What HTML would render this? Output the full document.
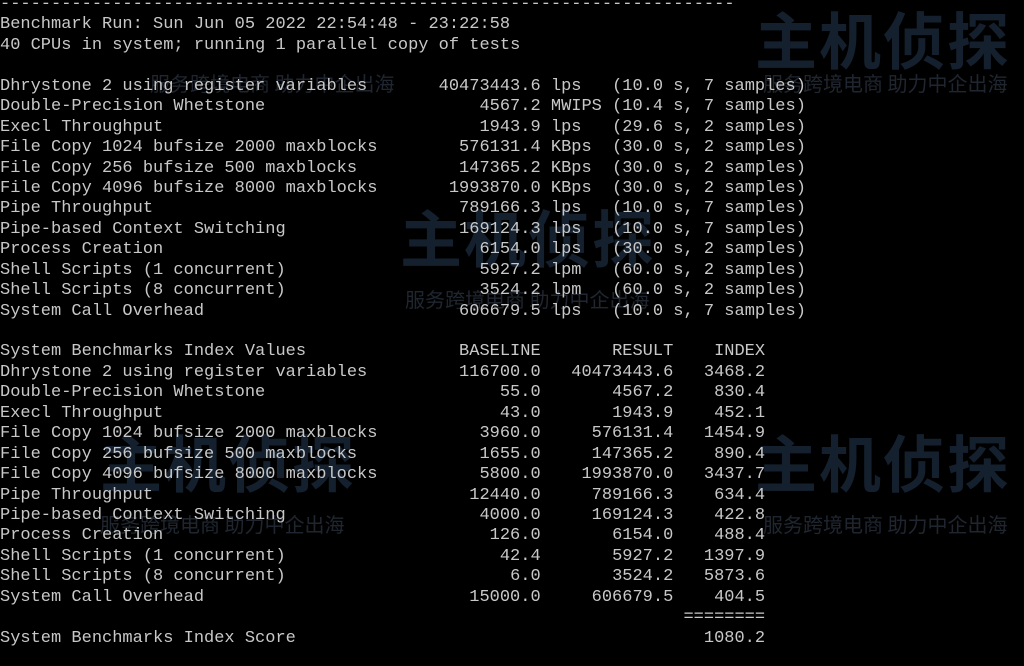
<!DOCTYPE html>
<html><head><meta charset="utf-8"><style>
html,body{margin:0;padding:0;background:#000;width:1024px;height:666px;overflow:hidden;position:relative}
.wm{position:absolute;color:#14202e;font-family:"Noto Sans CJK SC",sans-serif;white-space:nowrap;z-index:0}
.big{font-size:62px;font-weight:bold;letter-spacing:2px}
.sm{font-size:20px;color:#202630}
.term{position:absolute;left:0;top:-5px;z-index:1;font-family:"Liberation Mono",monospace;font-size:17px;line-height:20.45px;color:#c8c8c8;white-space:pre}
.r{display:flex;height:20.45px}
.n{width:40ch;display:inline-block}
.v{width:13ch;text-align:right;display:inline-block}
.i{width:9ch;text-align:right;display:inline-block}
</style></head><body>
<div class="wm big" style="left:755px;top:-8px">主机侦探</div>
<div class="wm sm" style="left:763px;top:68px">服务跨境电商 助力中企出海</div>
<div class="wm sm" style="left:150px;top:68px">服务跨境电商 助力中企出海</div>
<div class="wm big" style="left:400px;top:190px">主机侦探</div>
<div class="wm sm" style="left:405px;top:284px">服务跨境电商 助力中企出海</div>
<div class="wm big" style="left:100px;top:415px">主机侦探</div>
<div class="wm sm" style="left:100px;top:509px">服务跨境电商 助力中企出海</div>
<div class="wm big" style="left:755px;top:415px">主机侦探</div>
<div class="wm sm" style="left:763px;top:509px">服务跨境电商 助力中企出海</div>
<div class="term"><div class="r">------------------------------------------------------------------------</div><div class="r">Benchmark Run: Sun Jun 05 2022 22:54:48 - 23:22:58</div><div class="r">40 CPUs in system; running 1 parallel copy of tests</div><div class="r"> </div><div class="r"><span class="n">Dhrystone 2 using register variables</span><span class="v">40473443.6</span><span> lps   (10.0 s, 7 samples)</span></div><div class="r"><span class="n">Double-Precision Whetstone</span><span class="v">4567.2</span><span> MWIPS (10.4 s, 7 samples)</span></div><div class="r"><span class="n">Execl Throughput</span><span class="v">1943.9</span><span> lps   (29.6 s, 2 samples)</span></div><div class="r"><span class="n">File Copy 1024 bufsize 2000 maxblocks</span><span class="v">576131.4</span><span> KBps  (30.0 s, 2 samples)</span></div><div class="r"><span class="n">File Copy 256 bufsize 500 maxblocks</span><span class="v">147365.2</span><span> KBps  (30.0 s, 2 samples)</span></div><div class="r"><span class="n">File Copy 4096 bufsize 8000 maxblocks</span><span class="v">1993870.0</span><span> KBps  (30.0 s, 2 samples)</span></div><div class="r"><span class="n">Pipe Throughput</span><span class="v">789166.3</span><span> lps   (10.0 s, 7 samples)</span></div><div class="r"><span class="n">Pipe-based Context Switching</span><span class="v">169124.3</span><span> lps   (10.0 s, 7 samples)</span></div><div class="r"><span class="n">Process Creation</span><span class="v">6154.0</span><span> lps   (30.0 s, 2 samples)</span></div><div class="r"><span class="n">Shell Scripts (1 concurrent)</span><span class="v">5927.2</span><span> lpm   (60.0 s, 2 samples)</span></div><div class="r"><span class="n">Shell Scripts (8 concurrent)</span><span class="v">3524.2</span><span> lpm   (60.0 s, 2 samples)</span></div><div class="r"><span class="n">System Call Overhead</span><span class="v">606679.5</span><span> lps   (10.0 s, 7 samples)</span></div><div class="r"> </div><div class="r"><span class="n">System Benchmarks Index Values</span><span class="v">BASELINE</span><span class="v">RESULT</span><span class="i">INDEX</span></div><div class="r"><span class="n">Dhrystone 2 using register variables</span><span class="v">116700.0</span><span class="v">40473443.6</span><span class="i">3468.2</span></div><div class="r"><span class="n">Double-Precision Whetstone</span><span class="v">55.0</span><span class="v">4567.2</span><span class="i">830.4</span></div><div class="r"><span class="n">Execl Throughput</span><span class="v">43.0</span><span class="v">1943.9</span><span class="i">452.1</span></div><div class="r"><span class="n">File Copy 1024 bufsize 2000 maxblocks</span><span class="v">3960.0</span><span class="v">576131.4</span><span class="i">1454.9</span></div><div class="r"><span class="n">File Copy 256 bufsize 500 maxblocks</span><span class="v">1655.0</span><span class="v">147365.2</span><span class="i">890.4</span></div><div class="r"><span class="n">File Copy 4096 bufsize 8000 maxblocks</span><span class="v">5800.0</span><span class="v">1993870.0</span><span class="i">3437.7</span></div><div class="r"><span class="n">Pipe Throughput</span><span class="v">12440.0</span><span class="v">789166.3</span><span class="i">634.4</span></div><div class="r"><span class="n">Pipe-based Context Switching</span><span class="v">4000.0</span><span class="v">169124.3</span><span class="i">422.8</span></div><div class="r"><span class="n">Process Creation</span><span class="v">126.0</span><span class="v">6154.0</span><span class="i">488.4</span></div><div class="r"><span class="n">Shell Scripts (1 concurrent)</span><span class="v">42.4</span><span class="v">5927.2</span><span class="i">1397.9</span></div><div class="r"><span class="n">Shell Scripts (8 concurrent)</span><span class="v">6.0</span><span class="v">3524.2</span><span class="i">5873.6</span></div><div class="r"><span class="n">System Call Overhead</span><span class="v">15000.0</span><span class="v">606679.5</span><span class="i">404.5</span></div><div class="r"><span class="n"></span><span class="v"></span><span class="v"></span><span class="i">========</span></div><div class="r"><span class="n">System Benchmarks Index Score</span><span class="v"></span><span class="v"></span><span class="i">1080.2</span></div></div>
</body></html>
